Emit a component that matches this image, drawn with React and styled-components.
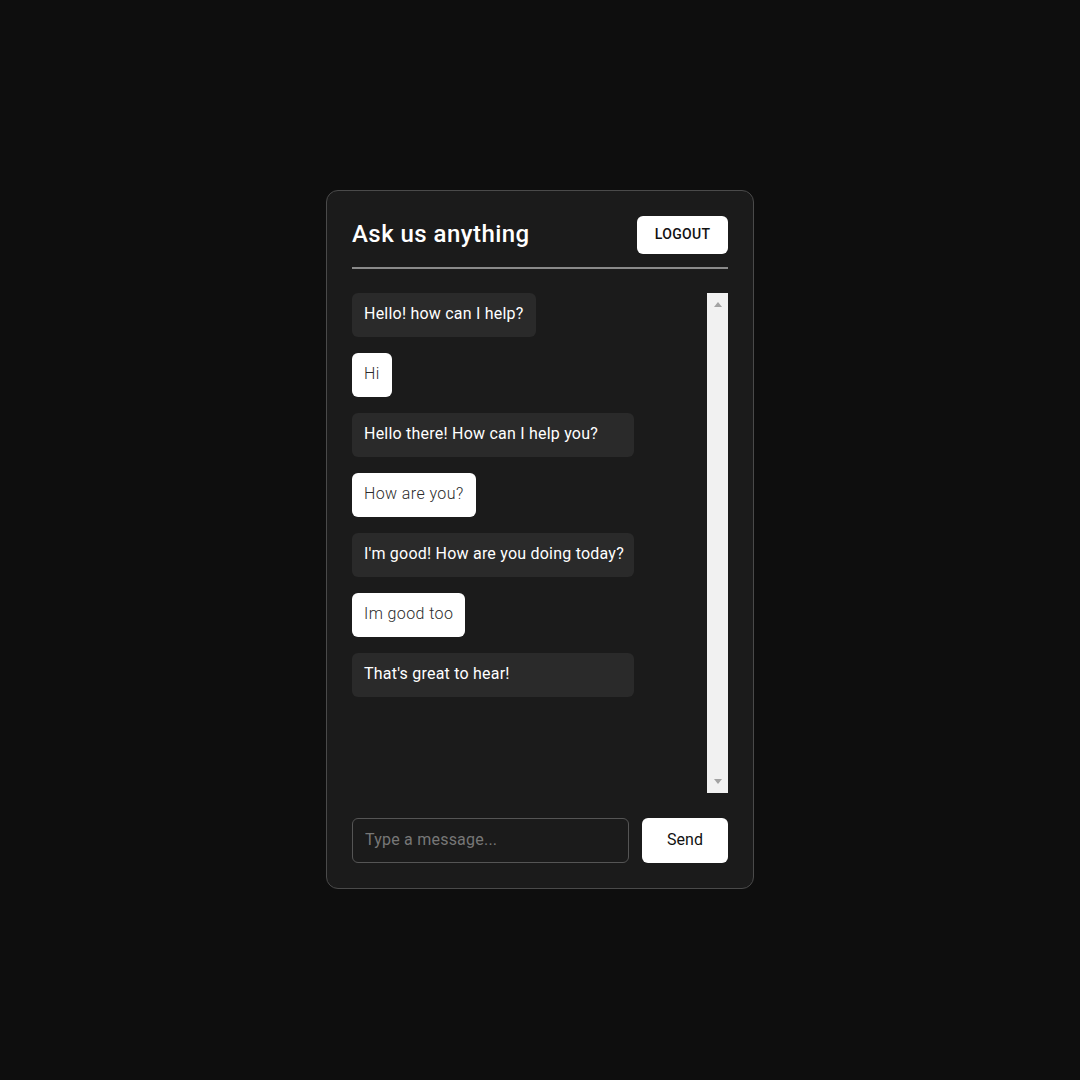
import styled, { createGlobalStyle } from "styled-components";

const GlobalStyle = createGlobalStyle`
  html, body {
    margin: 0;
    padding: 0;
    background: #0e0e0e;
    font-family: Roboto, "Liberation Sans", sans-serif;
  }
`;

const MESSAGES = [
  { from: "bot", text: "Hello! how can I help?" },
  { from: "user", text: "Hi" },
  { from: "bot", text: "Hello there! How can I help you?", wide: true },
  { from: "user", text: "How are you?" },
  { from: "bot", text: "I'm good! How are you doing today?", wide: true },
  { from: "user", text: "Im good too" },
  { from: "bot", text: "That's great to hear!", wide: true },
];

const App = () => {
  return (
    <>
      <GlobalStyle />
      <Page>
        <Card>
          <Header>
            <Title>Ask us anything</Title>
            <LogoutButton>LOGOUT</LogoutButton>
          </Header>
          <ChatArea>
            <MessageList>
              {MESSAGES.map((msg, i) => (
                <Bubble key={i} $user={msg.from === "user"} $wide={msg.wide}>
                  {msg.text}
                </Bubble>
              ))}
            </MessageList>
            <ScrollTrack>
              <ArrowUp />
              <ArrowDown />
            </ScrollTrack>
          </ChatArea>
          <InputRow>
            <MessageInput placeholder="Type a message..." />
            <SendButton>Send</SendButton>
          </InputRow>
        </Card>
      </Page>
    </>
  );
};

export default App;

export const Page = styled.div`
  width: 1080px;
  height: 1080px;
  box-sizing: border-box;
  padding-top: 190px;
  display: flex;
  align-items: flex-start;
  justify-content: center;
`;

export const Card = styled.div`
  width: 376px;
  padding: 25px;
  background: #1b1b1b;
  border: 1px solid #4a4a4a;
  border-radius: 12px;
  display: flex;
  flex-direction: column;
`;

export const Header = styled.div`
  display: flex;
  align-items: center;
  justify-content: space-between;
  padding-bottom: 13px;
  border-bottom: 2px solid #8a8a8a;
`;

export const Title = styled.h1`
  margin: 0 0 2px;
  font-size: 24px;
  font-weight: 500;
  letter-spacing: 0.45px;
  color: #fff;
`;

export const LogoutButton = styled.button`
  width: 91px;
  height: 38px;
  padding: 0 0 2px;
  background: #fff;
  color: #111;
  border: none;
  border-radius: 6px;
  font-family: inherit;
  font-size: 14px;
  font-weight: 500;
  letter-spacing: 0.3px;
`;

export const ChatArea = styled.div`
  margin-top: 24px;
  height: 500px;
  display: flex;
`;

export const MessageList = styled.div`
  flex: 1;
  display: flex;
  flex-direction: column;
  align-items: flex-start;
  gap: 16px;
`;

export const Bubble = styled.div`
  box-sizing: border-box;
  height: 44px;
  display: flex;
  align-items: center;
  padding: 0 12px 3px;
  border-radius: 6px;
  font-size: 16px;
  white-space: nowrap;
  width: ${(p) => (p.$wide ? "282px" : "auto")};
  background: ${(p) => (p.$user ? "#fff" : "#2a2a2a")};
  color: ${(p) => (p.$user ? "#2b2b2b" : "#fff")};
  font-weight: ${(p) => (p.$user ? 300 : 400)};
  letter-spacing: ${(p) => (p.$user ? "0.4px" : "0.22px")};
`;

export const ScrollTrack = styled.div`
  width: 21px;
  background: #f1f1f1;
  display: flex;
  flex-direction: column;
  align-items: center;
  justify-content: space-between;
  padding: 9px 0;
  box-sizing: border-box;
`;

export const ArrowUp = styled.div`
  width: 0;
  height: 0;
  border-left: 4px solid transparent;
  border-right: 4px solid transparent;
  border-bottom: 5px solid #a3a3a3;
`;

export const ArrowDown = styled.div`
  width: 0;
  height: 0;
  border-left: 4px solid transparent;
  border-right: 4px solid transparent;
  border-top: 5px solid #a3a3a3;
`;

export const InputRow = styled.div`
  margin-top: 25px;
  display: flex;
  gap: 13px;
`;

export const MessageInput = styled.input`
  flex: 1;
  height: 45px;
  box-sizing: border-box;
  padding: 0 12px 2px;
  background: #1b1b1b;
  border: 1px solid #555;
  border-radius: 6px;
  color: #fff;
  font-family: inherit;
  font-size: 16px;
  letter-spacing: 0.22px;
  outline: none;

  &::placeholder {
    color: #777;
  }
`;

export const SendButton = styled.button`
  width: 86px;
  height: 45px;
  padding: 0 0 2px;
  background: #fff;
  color: #111;
  border: none;
  border-radius: 6px;
  font-family: inherit;
  font-size: 16px;
  font-weight: 400;
`;
